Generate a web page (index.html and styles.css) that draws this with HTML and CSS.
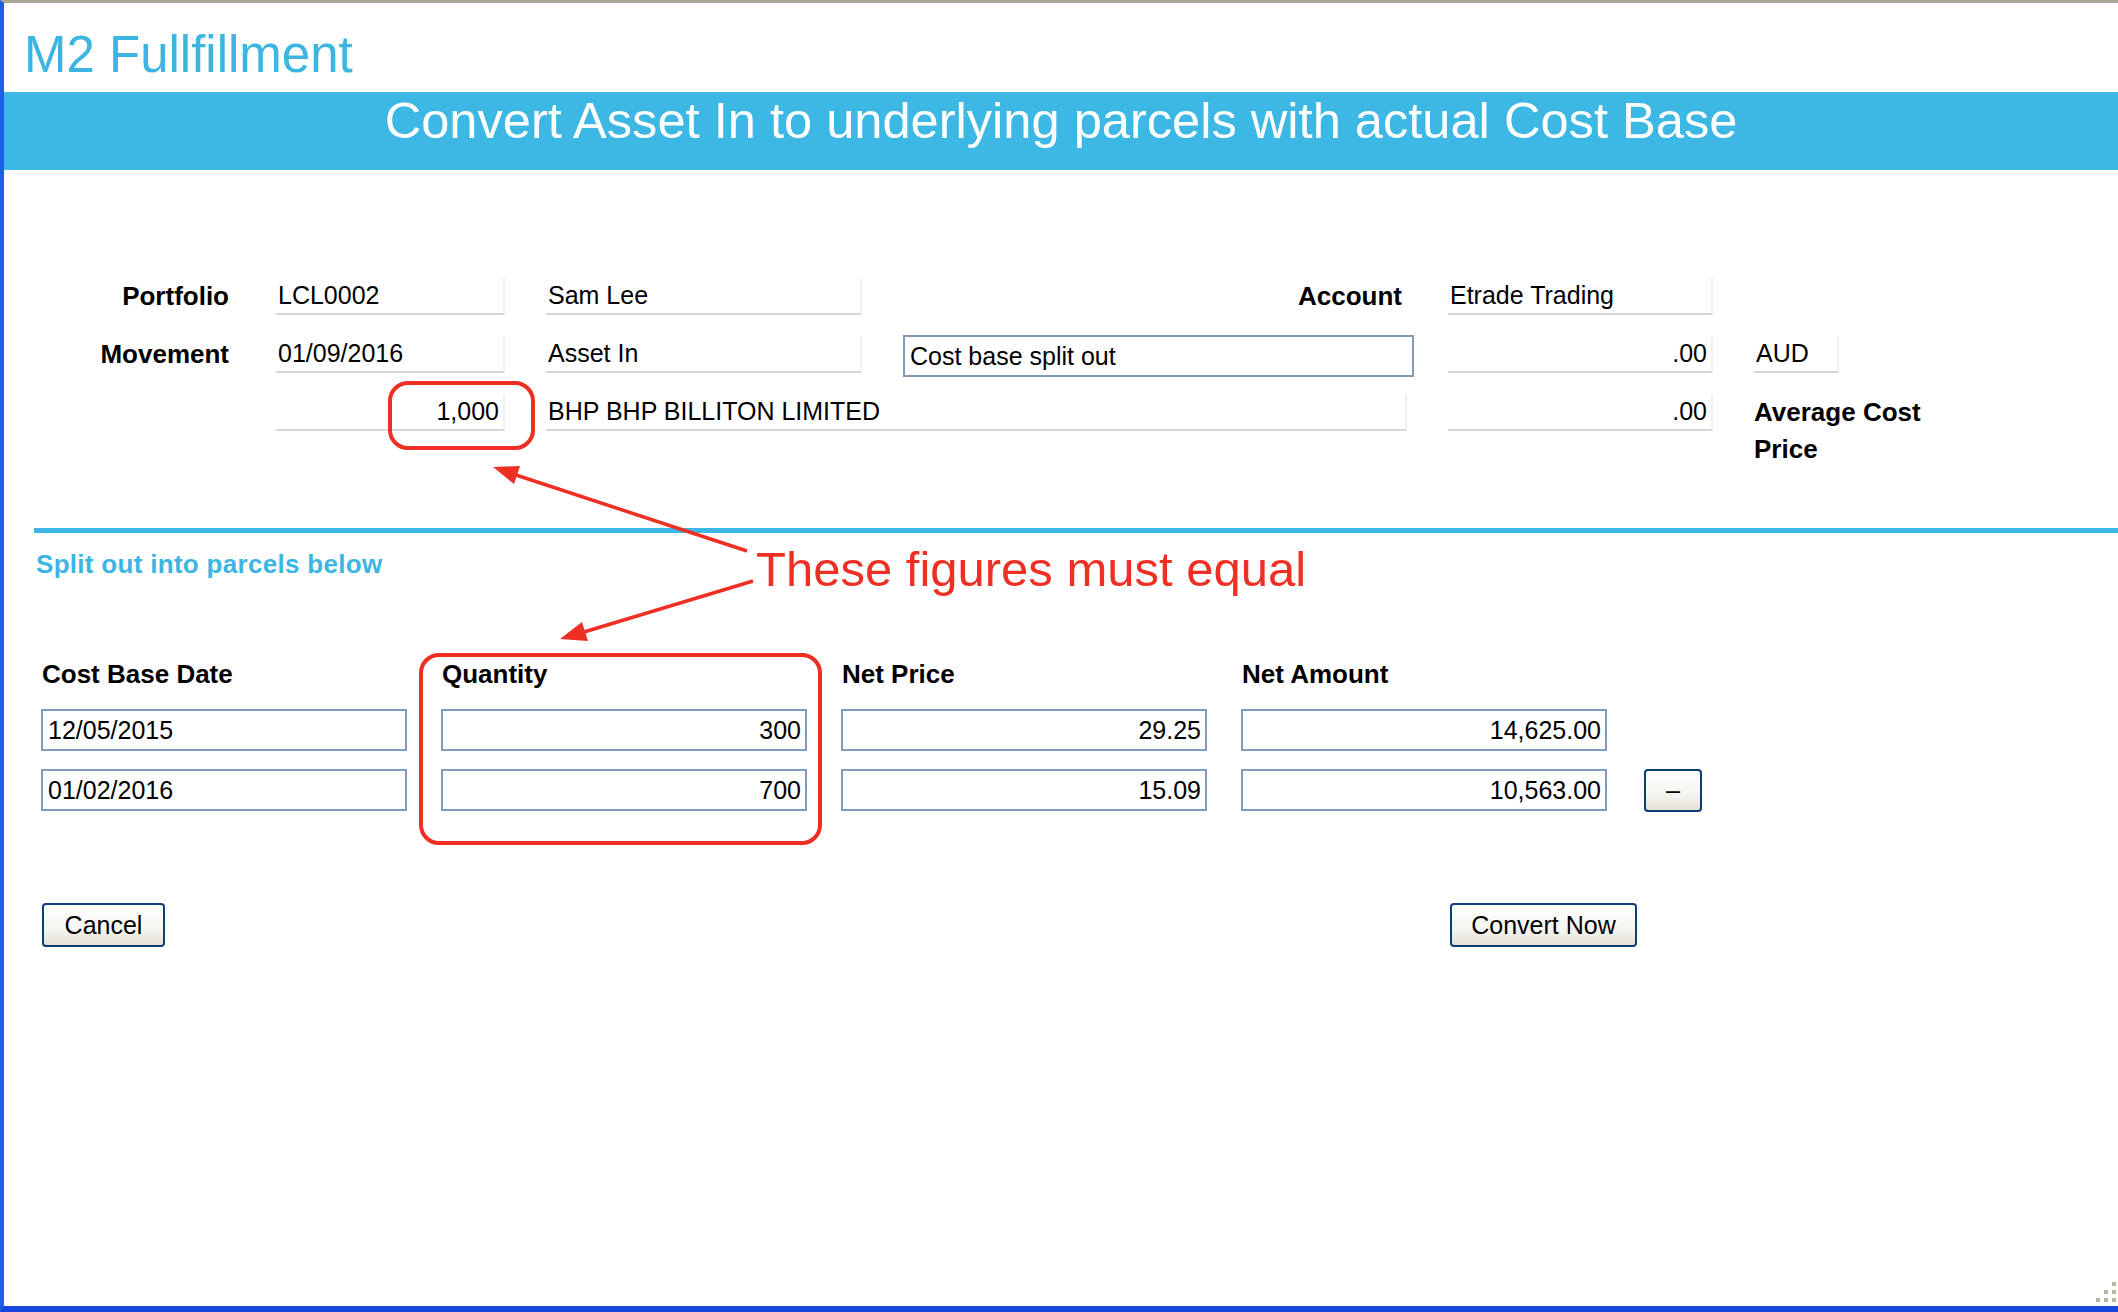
FILE: index.html
```html
<!DOCTYPE html>
<html>
	<head>
		<meta charset="utf-8">
		<title>M2 Fullfillment</title>
		<link rel="stylesheet" href="styles.css">
	</head>
	<body>
		<div class="page">
			<div class="title">M2 Fullfillment</div>
			<div class="banner">Convert Asset In to underlying parcels with actual Cost Base</div>

			<!-- header details -->
			<div class="form">
				<div class="label">Portfolio</div>
				<div class="field">LCL0002</div>
				<div class="field">Sam Lee</div>
				<div class="label label-account">Account</div>
				<div class="field">Etrade Trading</div>
				<div></div>

				<div class="label">Movement</div>
				<div class="field">01/09/2016</div>
				<div class="field">Asset In</div>
				<input class="edit edit-note" type="text" value="Cost base split out">
				<div class="field num">.00</div>
				<div class="field field-small">AUD</div>

				<div></div>
				<div class="field num">1,000</div>
				<div class="field field-wide">BHP BHP BILLITON LIMITED</div>
				<div class="field num">.00</div>
				<div class="label label-left">Average Cost Price</div>
			</div>

			<div class="rule"></div>
			<div class="split">Split out into parcels below</div>

			<!-- parcels -->
			<div class="parcels">
				<div class="head">Cost Base Date</div>
				<div class="head">Quantity</div>
				<div class="head">Net Price</div>
				<div class="head">Net Amount</div>
				<div></div>

				<input class="edit" type="text" value="12/05/2015">
				<input class="edit num" type="text" value="300">
				<input class="edit num" type="text" value="29.25">
				<input class="edit num" type="text" value="14,625.00">
				<div></div>

				<input class="edit" type="text" value="01/02/2016">
				<input class="edit num" type="text" value="700">
				<input class="edit num" type="text" value="15.09">
				<input class="edit num" type="text" value="10,563.00">
				<button class="btn btn-minus">–</button>
			</div>

			<div class="actions">
				<button class="btn btn-cancel">Cancel</button>
				<button class="btn btn-convert">Convert Now</button>
			</div>

			<!-- annotations drawn over the screen -->
			<svg class="notes" viewBox="0 0 2118 1312" width="2118" height="1312">
				<rect x="390" y="383" width="143" height="65" rx="18" fill="none" stroke="#ee2f23" stroke-width="4"/>
				<rect x="421" y="655" width="399" height="188" rx="18" fill="none" stroke="#ee2f23" stroke-width="4"/>
				<line x1="747" y1="551" x2="516" y2="475" stroke="#ee2f23" stroke-width="3.5"/>
				<polygon points="493,467 520,466 514,484" fill="#ee2f23"/>
				<line x1="753" y1="581" x2="584" y2="632" stroke="#ee2f23" stroke-width="3.5"/>
				<polygon points="560,639 582,622 588,641" fill="#ee2f23"/>
				<text x="756" y="586" class="note-text">These figures must equal</text>
				<g fill="#b8b4a2">
					<rect x="2112" y="1282" width="4" height="4"/>
					<rect x="2104" y="1290" width="4" height="4"/>
					<rect x="2112" y="1290" width="4" height="4"/>
					<rect x="2096" y="1298" width="4" height="4"/>
					<rect x="2104" y="1298" width="4" height="4"/>
					<rect x="2112" y="1298" width="4" height="4"/>
				</g>
			</svg>
		</div>
	</body>
</html>
```

FILE: styles.css
```css
html,body{margin:0;padding:0;background:#fff;}
body{font-family:"Liberation Sans",Arial,sans-serif;color:#000;}

.page{
	position:relative;
	height:1312px;
	box-sizing:border-box;
	border-top:3px solid #a9a697;
	border-left:4px solid #1f5fe8;
	border-bottom:6px solid #1646dc;
	overflow:hidden;
}

.title{
	padding:23px 0 8px 20px;
	font-size:51px;
	line-height:58px;
	color:#3cb5e3;
}
.banner{
	height:78px;
	background:#3db7e4;
	color:#fff;
	font-size:50.6px;
	line-height:58px;
	text-align:center;
}

.form{
	display:grid;
	grid-template-columns:231px 229px 316px 504px 265px 180px;
	grid-template-rows:40px 40px 40px;
	column-gap:41px;
	row-gap:18px;
	margin-top:108px;
	font-size:25px;
}
.label{
	font-size:26px;
	font-weight:bold;
	line-height:37px;
	text-align:right;
	padding-right:6px;
	white-space:nowrap;
}
.label-account{padding-right:5px;}
.label-left{text-align:left;white-space:normal;padding-right:0;}
.field{
	height:37px;
	box-sizing:border-box;
	border-right:2px solid #f1f0ea;
	border-bottom:2px solid #d6d6d6;
	padding:0 2px;
	line-height:35px;
	white-space:nowrap;
	overflow:hidden;
}
.field.num{text-align:right;padding-right:4px;}
.field-small{width:85px;}
.field-wide{grid-column:span 2;}

.edit{
	display:block;
	width:100%;
	height:42px;
	box-sizing:border-box;
	margin:0;
	border:2px solid #7f9db9;
	border-radius:0;
	padding:0 4px 0 5px;
	font-family:"Liberation Sans",Arial,sans-serif;
	font-size:25px;
	color:#000;
	background:#fff;
	outline:none;
	align-self:center;
}
.edit.num{text-align:right;}
.edit-note{width:calc(100% + 7px);}

.rule{
	height:5px;
	margin:94px 0 0 30px;
	background:#3db7e4;
}
.split{
	margin-top:16px;
	padding-left:32px;
	font-size:26px;
	line-height:30px;
	font-weight:bold;
	letter-spacing:0.3px;
	color:#3db5e2;
}

.parcels{
	display:grid;
	grid-template-columns:366px 366px 366px 366px 58px;
	grid-template-rows:32px 42px 42px;
	column-gap:34px;
	row-gap:18px;
	margin:80px 0 0 37px;
}
.head{
	font-size:26px;
	font-weight:bold;
	line-height:30px;
	padding-left:1px;
	white-space:nowrap;
}

.btn{
	box-sizing:border-box;
	height:44px;
	margin:0;
	padding:0;
	border:2px solid #0b3d78;
	border-radius:4px;
	background:linear-gradient(#ffffff,#f6f5f1 60%,#e4e0d5);
	font-family:"Liberation Sans",Arial,sans-serif;
	font-size:25px;
	color:#000;
}
.btn-minus{width:58px;height:43px;align-self:center;margin-left:3px;}

.actions{
	display:flex;
	justify-content:space-between;
	width:1595px;
	margin:92px 0 0 38px;
}
.btn-cancel{width:123px;}
.btn-convert{width:187px;}

.notes{
	position:absolute;
	left:-4px;
	top:-3px;
	pointer-events:none;
}
.note-text{
	font-family:"Liberation Sans",Arial,sans-serif;
	font-size:49px;
	fill:#ee2f23;
}
```
